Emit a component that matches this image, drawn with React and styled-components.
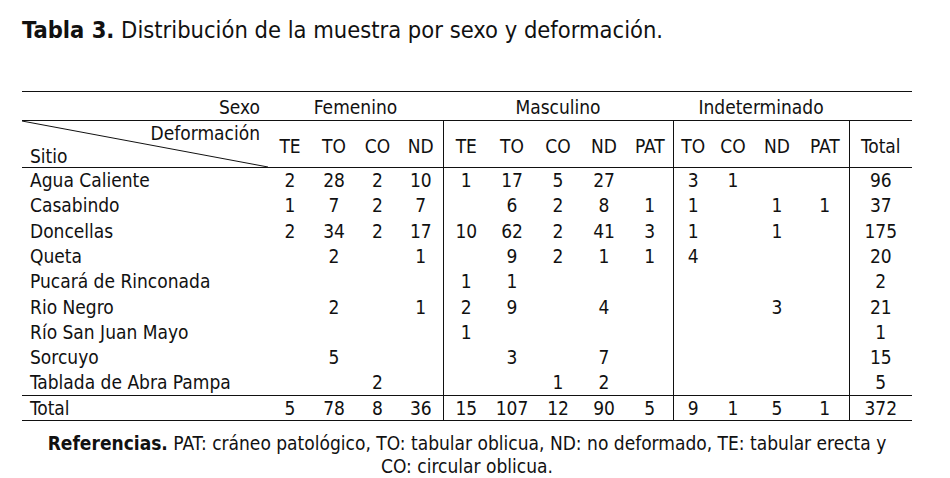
import React from "react";
import styled, { createGlobalStyle } from "styled-components";

const GlobalStyle = createGlobalStyle`
  body {
    margin: 0;
    background: #fff;
    color: #111;
    font-family: "DejaVu Sans Condensed", "DejaVu Sans", sans-serif;
    font-stretch: condensed;
  }
`;

const groups = [
  { name: "Femenino", cols: ["TE", "TO", "CO", "ND"], widths: [44, 44, 43, 44] },
  { name: "Masculino", cols: ["TE", "TO", "CO", "ND", "PAT"], widths: [46, 46, 46, 46, 46] },
  { name: "Indeterminado", cols: ["TO", "CO", "ND", "PAT"], widths: [40, 40, 48, 48] },
];

const rows = [
  ["Agua Caliente", [2, 28, 2, 10], [1, 17, 5, 27, ""], [3, 1, "", ""], 96],
  ["Casabindo", [1, 7, 2, 7], ["", 6, 2, 8, 1], [1, "", 1, 1], 37],
  ["Doncellas", [2, 34, 2, 17], [10, 62, 2, 41, 3], [1, "", 1, ""], 175],
  ["Queta", ["", 2, "", 1], ["", 9, 2, 1, 1], [4, "", "", ""], 20],
  ["Pucará de Rinconada", ["", "", "", ""], [1, 1, "", "", ""], ["", "", "", ""], 2],
  ["Rio Negro", ["", 2, "", 1], [2, 9, "", 4, ""], ["", "", 3, ""], 21],
  ["Río San Juan Mayo", ["", "", "", ""], [1, "", "", "", ""], ["", "", "", ""], 1],
  ["Sorcuyo", ["", 5, "", ""], ["", 3, "", 7, ""], ["", "", "", ""], 15],
  ["Tablada de Abra Pampa", ["", "", 2, ""], ["", "", 1, 2, ""], ["", "", "", ""], 5],
];

const totals = ["Total", [5, 78, 8, 36], [15, 107, 12, 90, 5], [9, 1, 5, 1], 372];

const Page = styled.div`
  padding: 0 38px 0 22px;
  width: 890px;
`;

const Title = styled.h1`
  margin: 0;
  padding-top: 15px;
  font-size: 23.5px;
  font-weight: normal;
  line-height: 30px;
  height: 76px;

  strong {
    font-weight: bold;
  }
`;

const Table = styled.table`
  width: 890px;
  table-layout: fixed;
  border-collapse: collapse;
  font-size: 19px;
  border-top: 1.5px solid #111;
  border-bottom: 1px solid #111;
`;

const GroupRow = styled.tr`
  height: 29px;
  border-bottom: 1px solid #111;
`;

const ColRow = styled.tr`
  height: 46px;
  border-bottom: 1px solid #111;
`;

const DataRow = styled.tr`
  height: 25.3px;
`;

const TotalRow = styled.tr`
  height: 25px;
  border-top: 1px solid #111;
`;

const SexLabel = styled.th`
  font-weight: normal;
  text-align: right;
  padding: 2px 8px 0 0;
`;

const GroupName = styled.th`
  font-weight: normal;
  text-align: center;
  padding: 2px 0 0;
`;

const CornerCell = styled.th`
  position: relative;
  font-weight: normal;
  padding: 0;
  height: 46px;
`;

const CornerTop = styled.div`
  position: absolute;
  top: 1px;
  right: 8px;
`;

const CornerBottom = styled.div`
  position: absolute;
  bottom: 0;
  left: 8px;
`;

const Diagonal = styled.svg`
  position: absolute;
  left: 0;
  top: 0;
  width: 100%;
  height: 100%;
`;

const ColHead = styled.th`
  font-weight: normal;
  text-align: center;
  padding: 4px 0 0;
  border-left: ${(p) => (p.$divider ? "1px solid #111" : "none")};
`;

const Label = styled.td`
  padding: 0 0 0 8px;
  white-space: nowrap;
`;

const Num = styled.td`
  text-align: center;
  padding: 0;
  border-left: ${(p) => (p.$divider ? "1px solid #111" : "none")};
`;

const Note = styled.p`
  margin: 11px 0 0;
  width: 890px;
  text-align: center;
  font-size: 19px;
  line-height: 23px;

  strong {
    font-weight: bold;
  }
`;

const Cells = ({ row }) => (
  <>
    <Label>{row[0]}</Label>
    {groups.map((g, gi) =>
      row[gi + 1].map((v, ci) => (
        <Num key={`${gi}-${ci}`} $divider={gi > 0 && ci === 0}>
          {v}
        </Num>
      ))
    )}
    <Num $divider>{row[4]}</Num>
  </>
);

export default function App() {
  return (
    <Page>
      <GlobalStyle />
      <Title>
        <strong>Tabla 3.</strong> Distribución de la muestra por sexo y deformación.
      </Title>
      <Table>
        <colgroup>
          <col style={{ width: 246 }} />
          {groups.map((g) => g.widths.map((w, i) => <col key={g.name + i} style={{ width: w }} />))}
          <col style={{ width: 63 }} />
        </colgroup>
        <thead>
          <GroupRow>
            <SexLabel>Sexo</SexLabel>
            {groups.map((g) => (
              <GroupName key={g.name} colSpan={g.cols.length}>
                {g.name}
              </GroupName>
            ))}
            <GroupName />
          </GroupRow>
          <ColRow>
            <CornerCell>
              <Diagonal viewBox="0 0 100 100" preserveAspectRatio="none">
                <line x1="0" y1="0" x2="100" y2="100" stroke="#111" strokeWidth="1" vectorEffect="non-scaling-stroke" />
              </Diagonal>
              <CornerTop>Deformación</CornerTop>
              <CornerBottom>Sitio</CornerBottom>
            </CornerCell>
            {groups.map((g, gi) =>
              g.cols.map((c, ci) => (
                <ColHead key={g.name + c} $divider={gi > 0 && ci === 0}>
                  {c}
                </ColHead>
              ))
            )}
            <ColHead $divider>Total</ColHead>
          </ColRow>
        </thead>
        <tbody>
          {rows.map((r) => (
            <DataRow key={r[0]}>
              <Cells row={r} />
            </DataRow>
          ))}
          <TotalRow>
            <Cells row={totals} />
          </TotalRow>
        </tbody>
      </Table>
      <Note>
        <strong>Referencias.</strong> PAT: cráneo patológico, TO: tabular oblicua, ND: no deformado, TE: tabular erecta y
        <br />
        CO: circular oblicua.
      </Note>
    </Page>
  );
}
